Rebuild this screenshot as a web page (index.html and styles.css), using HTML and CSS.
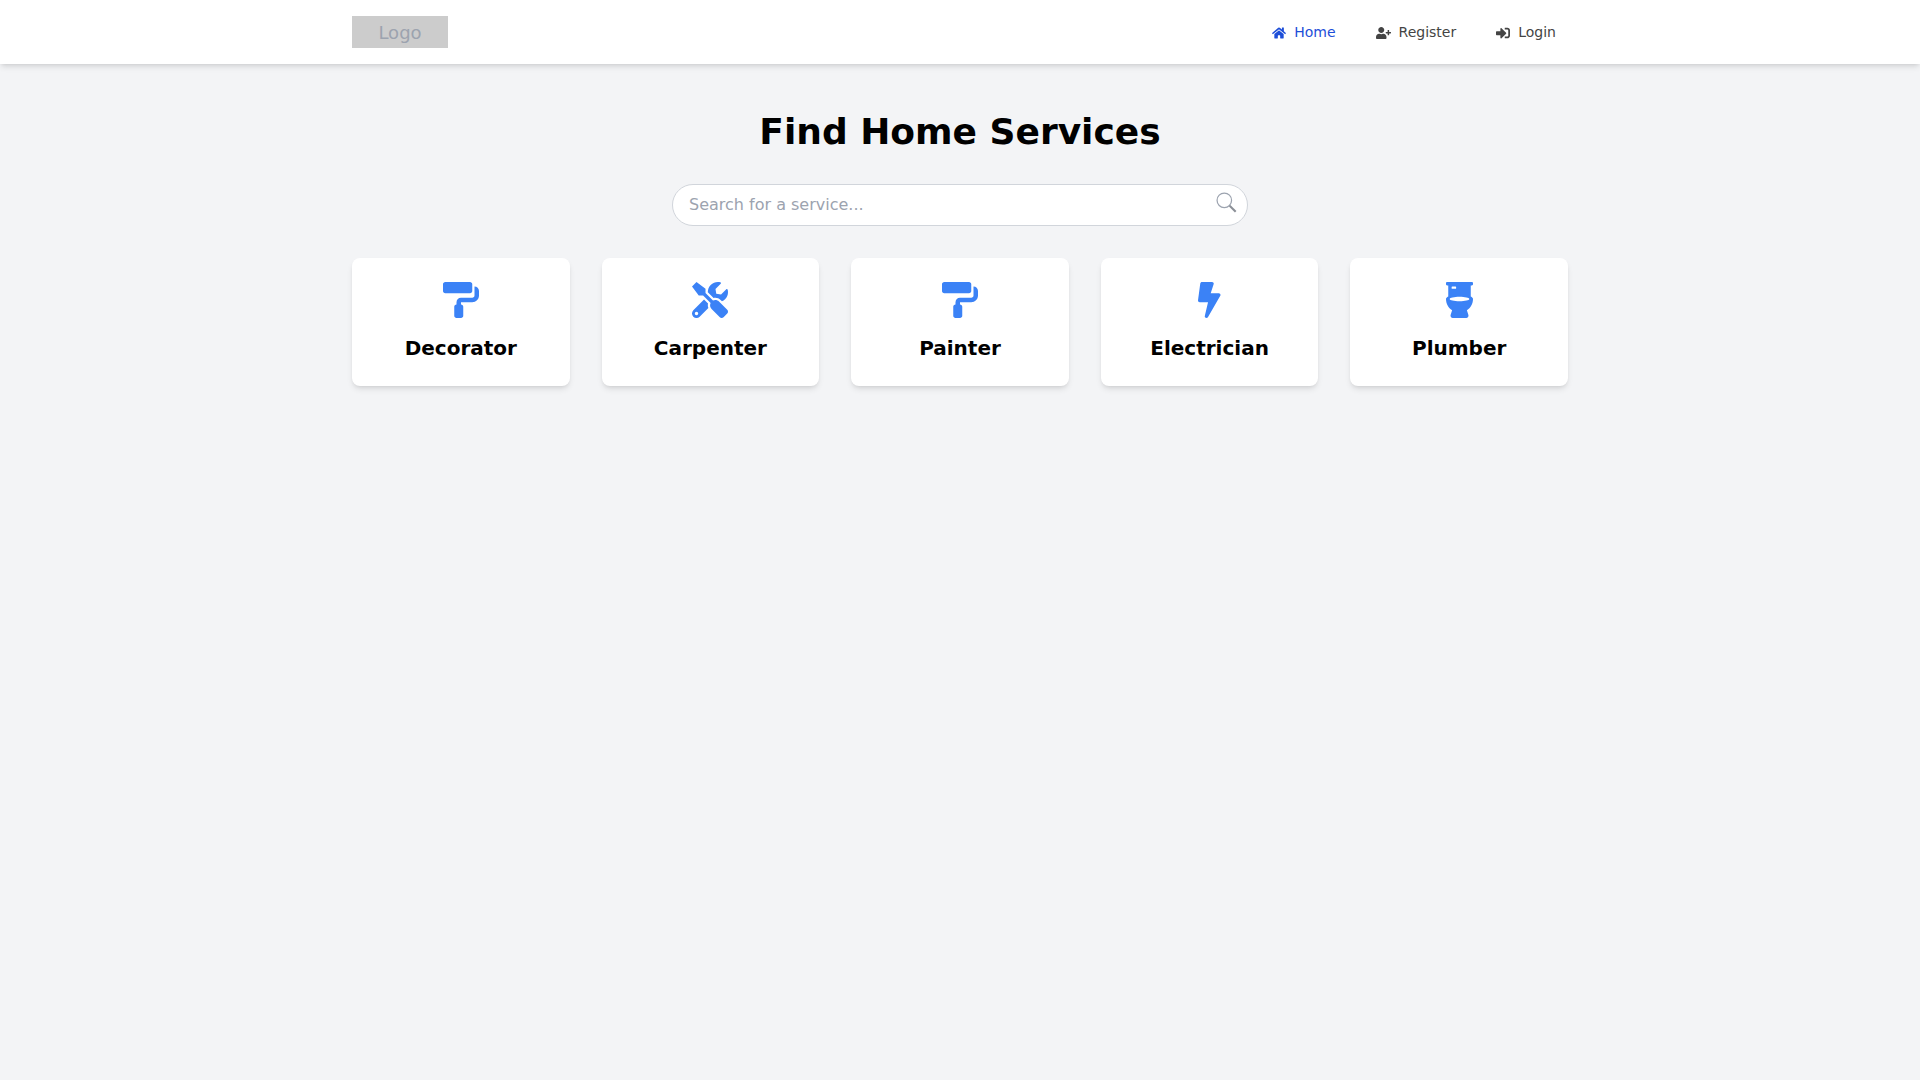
FILE: index.html
```html
<!DOCTYPE html>
<html lang="en">
<head>
<meta charset="utf-8">
<title>Find Home Services</title>
<link rel="stylesheet" href="styles.css">
</head>
<body>
<nav class="navbar">
  <div class="navbar-inner">
    <div class="logo">Logo</div>
    <div class="nav-links">
      <a class="nav-link nav-link-active" href="#">
        <svg class="nav-icon" viewBox="0 0 576 512"><path d="M280.37 148.26L96 300.11V464a16 16 0 0 0 16 16l112.06-.29a16 16 0 0 0 15.92-16V368a16 16 0 0 1 16-16h64a16 16 0 0 1 16 16v95.64a16 16 0 0 0 16 16.05L464 480a16 16 0 0 0 16-16V300L295.67 148.26a12.19 12.19 0 0 0-15.3 0zM571.6 251.47L488 182.56V44.05a12 12 0 0 0-12-12h-56a12 12 0 0 0-12 12v72.61L318.47 43a48 48 0 0 0-61 0L4.34 251.47a12 12 0 0 0-1.6 16.9l25.5 31A12 12 0 0 0 45.15 301l235.22-193.74a12.19 12.19 0 0 1 15.3 0L530.9 301a12 12 0 0 0 16.9-1.6l25.5-31a12 12 0 0 0-1.7-16.93z"/></svg>
        <span>Home</span>
      </a>
      <a class="nav-link" href="#">
        <svg class="nav-icon nav-icon-wide" viewBox="0 0 640 512"><path d="M624 208h-64v-64c0-8.8-7.2-16-16-16h-32c-8.8 0-16 7.2-16 16v64h-64c-8.8 0-16 7.2-16 16v32c0 8.8 7.2 16 16 16h64v64c0 8.8 7.2 16 16 16h32c8.8 0 16-7.2 16-16v-64h64c8.8 0 16-7.2 16-16v-32c0-8.8-7.2-16-16-16zm-400 48c70.7 0 128-57.3 128-128S294.7 0 224 0 96 57.3 96 128s57.3 128 128 128zm89.6 32h-16.7c-22.2 10.2-46.9 16-72.9 16s-50.6-5.8-72.9-16h-16.7C60.2 288 0 348.2 0 422.4V464c0 26.5 21.5 48 48 48h352c26.5 0 48-21.5 48-48v-41.6c0-74.2-60.2-134.4-134.4-134.4z"/></svg>
        <span>Register</span>
      </a>
      <a class="nav-link" href="#">
        <svg class="nav-icon" viewBox="0 0 512 512"><path d="M416 448h-84c-6.6 0-12-5.4-12-12v-40c0-6.6 5.4-12 12-12h84c17.7 0 32-14.3 32-32V160c0-17.7-14.3-32-32-32h-84c-6.6 0-12-5.4-12-12V76c0-6.6 5.4-12 12-12h84c53 0 96 43 96 96v192c0 53-43 96-96 96zm-47-201L201 79c-15-15-41-4.5-41 17v96H24c-13.3 0-24 10.7-24 24v96c0 13.3 10.7 24 24 24h136v96c0 21.5 26 32 41 17l168-168c9.3-9.4 9.3-24.6 0-34z"/></svg>
        <span>Login</span>
      </a>
    </div>
  </div>
</nav>
<main class="main">
  <h1 class="title">Find Home Services</h1>
  <div class="search">
    <input class="search-input" type="text" placeholder="Search for a service...">
    <svg class="search-icon" viewBox="0 0 24 24"><circle class="search-ring" cx="9.5" cy="9.5" r="8.3"/><path class="search-handle" d="M15.6 15.6l6.9 6.9"/></svg>
  </div>
  <div class="services">
    <a class="card" href="#">
      <svg class="card-icon" viewBox="0 0 512 512"><path d="M416 128V32c0-17.67-14.33-32-32-32H32C14.33 0 0 14.33 0 32v96c0 17.67 14.33 32 32 32h352c17.67 0 32-14.33 32-32zm32-64v128c0 17.67-14.33 32-32 32H256c-35.35 0-64 28.65-64 64v32c-17.67 0-32 14.33-32 32v128c0 17.67 14.33 32 32 32h64c17.67 0 32-14.33 32-32V352c0-17.67-14.33-32-32-32v-32h160c53.02 0 96-42.98 96-96v-64c0-35.35-28.65-64-64-64z"/></svg>
      <h2 class="card-title">Decorator</h2>
    </a>
    <a class="card" href="#">
      <svg class="card-icon" viewBox="0 0 512 512"><path d="M501.1 395.7L384 278.6c-23.1-23.1-57.6-27.6-85.4-13.9L192 158.1V96L64 0 0 64l96 128h62.1l106.6 106.6c-13.6 27.8-9.2 62.3 13.9 85.4l117.1 117.1c14.6 14.6 38.2 14.6 52.7 0l52.7-52.7c14.5-14.6 14.5-38.2 0-52.7zM331.7 225c28.3 0 54.9 11 74.9 31l19.4 19.4c15.8-6.9 30.8-16.5 43.8-29.5 37.1-37.1 49.7-89.3 37.9-136.7-2.2-9-13.5-12.1-20.1-5.5l-74.4 74.4-67.9-11.3L334 98.9l74.4-74.4c6.6-6.6 3.4-17.9-5.7-20.2-47.4-11.7-99.6.9-136.6 37.9-28.5 28.5-41.9 66.1-41.2 103.6l82.1 82.1c8.1-1.9 16.5-2.9 24.7-2.9zm-103.9 82l-56.7-56.7L18.7 402.8c-25 25-25 65.5 0 90.5s65.5 25 90.5 0l123.6-123.6c-7.6-19.9-9.9-41.6-5-62.7zM64 472c-13.2 0-24-10.8-24-24 0-13.3 10.7-24 24-24s24 10.7 24 24c0 13.2-10.7 24-24 24z"/></svg>
      <h2 class="card-title">Carpenter</h2>
    </a>
    <a class="card" href="#">
      <svg class="card-icon" viewBox="0 0 512 512"><path d="M416 128V32c0-17.67-14.33-32-32-32H32C14.33 0 0 14.33 0 32v96c0 17.67 14.33 32 32 32h352c17.67 0 32-14.33 32-32zm32-64v128c0 17.67-14.33 32-32 32H256c-35.35 0-64 28.65-64 64v32c-17.67 0-32 14.33-32 32v128c0 17.67 14.33 32 32 32h64c17.67 0 32-14.33 32-32V352c0-17.67-14.33-32-32-32v-32h160c53.02 0 96-42.98 96-96v-64c0-35.35-28.65-64-64-64z"/></svg>
      <h2 class="card-title">Painter</h2>
    </a>
    <a class="card" href="#">
      <svg class="card-icon" viewBox="0 0 320 512"><path d="M296 160H180.6l42.6-129.8C227.2 15 215.7 0 200 0H56C44 0 33.8 8.9 32.2 20.8l-32 240C-1.7 275.2 9.5 288 24 288h118.7L96.6 482.5c-3.6 15.2 8 29.5 23.3 29.5 8.4 0 16.4-4.4 20.8-12l176-304c9.3-15.9-2.2-36-20.7-36z"/></svg>
      <h2 class="card-title">Electrician</h2>
    </a>
    <a class="card" href="#">
      <svg class="card-icon" viewBox="0 0 384 512"><path d="M368 48c8.8 0 16-7.2 16-16V16c0-8.8-7.2-16-16-16H16C7.2 0 0 7.2 0 16v16c0 8.8 7.2 16 16 16h16v156.7C11.8 214.8 0 226.9 0 240c0 67.2 34.6 126.2 86.8 160.5l-21.4 70.2C59.1 491.2 74.5 512 96 512h192c21.5 0 36.9-20.8 30.6-41.3l-21.4-70.2C349.4 366.2 384 307.2 384 240c0-13.1-11.8-25.2-32-35.3V48h16zM80 72c0-4.4 3.6-8 8-8h48c4.4 0 8 3.6 8 8v16c0 4.4-3.6 8-8 8H88c-4.4 0-8-3.6-8-8V72zm112 200c-77.1 0-139.6-14.3-139.6-32s62.5-32 139.6-32 139.6 14.3 139.6 32-62.5 32-139.6 32z"/></svg>
      <h2 class="card-title">Plumber</h2>
    </a>
  </div>
</main>
</body>
</html>
```
FILE: styles.css
```css
* {
  box-sizing: border-box;
}

html,
body {
  margin: 0;
  padding: 0;
}

body {
  min-height: 100vh;
  background: #f3f4f6;
  color: #000;
  font-family: "DejaVu Sans", sans-serif;
  font-size: 16px;
  line-height: 24px;
}

.navbar {
  background: #fff;
  box-shadow: 0 4px 6px -1px rgba(0, 0, 0, 0.1), 0 2px 4px -2px rgba(0, 0, 0, 0.1);
}

.navbar-inner {
  max-width: 1280px;
  height: 64px;
  margin: 0 auto;
  padding: 0 32px;
  display: flex;
  align-items: center;
  justify-content: space-between;
}

.logo {
  width: 96px;
  height: 32px;
  background: #ccc;
  color: #9ca3af;
  font-size: 18px;
  line-height: 34px;
  text-align: center;
}

.nav-links {
  display: flex;
  align-items: center;
  gap: 16px;
}

.nav-link {
  display: flex;
  align-items: center;
  gap: 8px;
  padding: 8px 12px;
  color: #444;
  font-size: 14px;
  line-height: 20px;
  text-decoration: none;
}

.nav-link-active {
  color: #1d4ed8;
}

.nav-icon {
  width: 14px;
  height: 14px;
  fill: currentColor;
  position: relative;
  top: 1px;
}

.nav-icon-wide {
  width: 15px;
}

.main {
  max-width: 1280px;
  margin: 0 auto;
  padding: 48px 32px;
}

.title {
  margin: 0 0 32px;
  font-size: 36px;
  line-height: 40px;
  font-weight: 700;
  text-align: center;
}

.search {
  position: relative;
  width: 576px;
  margin: 0 auto 32px;
}

.search-input {
  display: block;
  width: 100%;
  height: 42px;
  padding: 7px 16px 9px;
  border: 1px solid #d1d5db;
  border-radius: 9999px;
  background: #fff;
  color: #374151;
  font: inherit;
  outline: none;
}

.search-input::placeholder {
  color: #9ca3af;
  opacity: 1;
}

.search-icon {
  position: absolute;
  top: 8px;
  right: 11px;
  width: 21px;
  height: 21px;
  fill: none;
}

.search-ring {
  stroke: #9ca3af;
  stroke-width: 1.4;
}

.search-handle {
  stroke: #8b8f97;
  stroke-width: 2.4;
}

.services {
  display: grid;
  grid-template-columns: repeat(5, 1fr);
  gap: 32px;
}

.card {
  display: flex;
  flex-direction: column;
  align-items: center;
  padding: 24px;
  border-radius: 8px;
  background: #fff;
  color: #000;
  text-decoration: none;
  box-shadow: 0 4px 6px -1px rgba(0, 0, 0, 0.1), 0 2px 4px -2px rgba(0, 0, 0, 0.1);
}

.card-icon {
  height: 36px;
  width: auto;
  margin-bottom: 16px;
  fill: #3b82f6;
}

.card-title {
  margin: 0;
  font-size: 20px;
  line-height: 28px;
  font-weight: 700;
}
```
